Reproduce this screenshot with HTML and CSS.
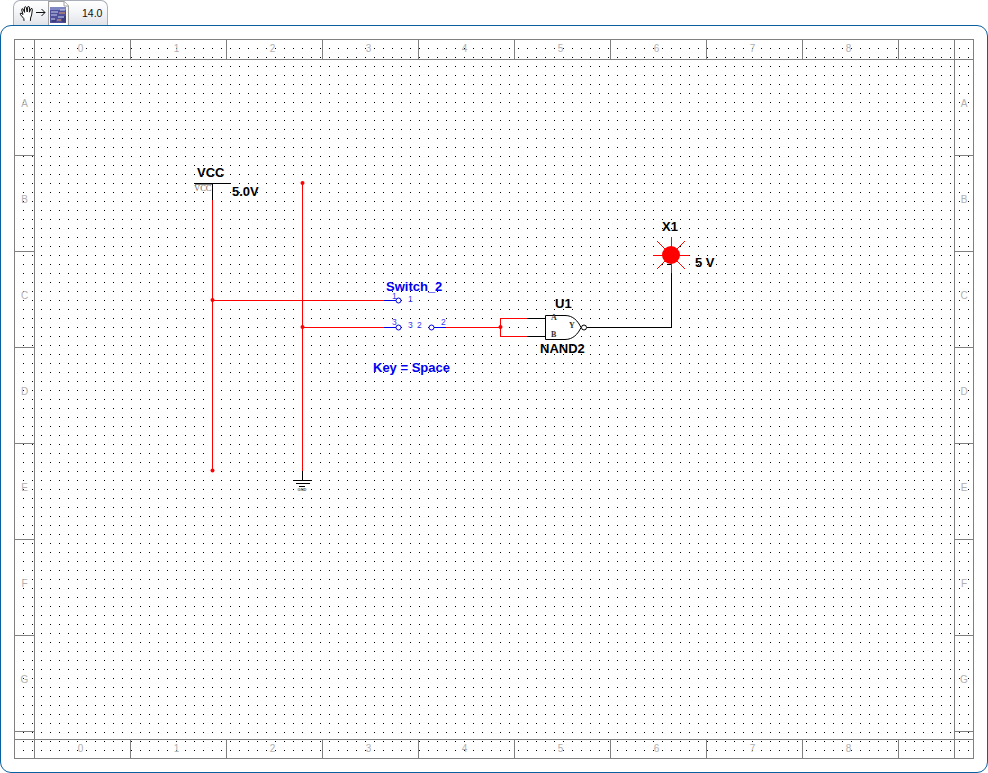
FILE: index.html
```html
<!DOCTYPE html>
<html lang="en">
<head>
<meta charset="utf-8">
<title>Schematic</title>
<link rel="stylesheet" href="styles.css">
</head>
<body>
<div class="tabbar">
  <div class="tab">
    <svg class="hand" viewBox="0 0 16 16" width="16" height="16">
      <path d="M5 15.5 L4.8 13.5 L1.6 9.8 Q0.6 8.2 2 8 L4 9.5 L2.6 4.6 Q2.8 3.2 4 4 L5.6 7.4 L5.4 2.4 Q6.2 1 7.2 2.2 L8.2 7 L8.8 1.8 Q10 0.9 10.5 2.2 L10.4 7.2 L12 3.6 Q13.4 3 13.4 4.6 L12.6 10 L11.6 13 L11.4 15.5" fill="#fff" stroke="#111" stroke-width="1" stroke-linejoin="round" stroke-linecap="round"/>
    </svg>
    <svg class="arrow" viewBox="0 0 10 9" width="10" height="9">
      <path d="M0 4.5 H9 M5.5 1 L9 4.5 L5.5 8" fill="none" stroke="#111" stroke-width="1"/>
    </svg>
    <svg class="doc" viewBox="0 0 21 25" width="21" height="25">
      <path d="M0.5 0.5 H16 L20.5 5 V24.5 H0.5 Z" fill="#fff" stroke="#a0a0a0" stroke-width="1.2"/>
      <path d="M16 0.5 V5 H20.5" fill="#fff" stroke="#a0a0a0"/>
      <rect x="2" y="6" width="16" height="16" fill="#50509a"/>
      <rect x="2" y="6" width="16" height="3" fill="#7f86c4"/>
      <path d="M3 11 H10 M3 14 H9 M10 16 H16 M3 18 H7 M12 9 H17" stroke="#c8d2f0" stroke-width="1"/>
      <path d="M11 12 H17 M9 19 H13" stroke="#e8a060" stroke-width="1"/>
      <path d="M15 17 V21 M17 15 V21 M4 20 H8" stroke="#2a2a60" stroke-width="1"/>
    </svg>
    <span class="version">14.0</span>
  </div>
</div>
<main class="panel">
  <div class="sheet">
    <svg class="schematic" width="958" height="718" viewBox="15 40 958 718" shape-rendering="crispEdges">
      <defs>
        <pattern id="dots" x="23" y="39" width="9" height="9" patternUnits="userSpaceOnUse">
          <rect x="0" y="0" width="1" height="1" fill="#000"/>
        </pattern>
      </defs>
      <rect x="23" y="48" width="946" height="703" fill="url(#dots)"/>

      <!-- wires -->
      <g class="wire-red">
        <path d="M212.5 200 V470.5"/>
        <path d="M302.5 183 V471"/>
        <path d="M212 300.5 H384"/>
        <path d="M302 327.5 H384"/>
        <path d="M446 327.5 H500"/>
        <path d="M500.5 327 V318.5 H527 M500.5 327 V336.5 H527"/>
      </g>
      <g class="wire-black">
        <path d="M194 183.5 H231"/>
        <path d="M212.5 183 V200"/>
        <path d="M302.5 471 V480"/>
        <path d="M293 480.5 H312 M296 483.5 H310 M299 486.5 H305"/>
        <path d="M527 318.5 H545 M527 336.5 H545"/>
        <path d="M587 327.5 H671.5 V264"/>
        <path d="M667 264.5 H671"/>
        <path class="overbar" d="M195 184.5 H212"/>
      </g>
      <g class="wire-blue">
        <path d="M384 300.5 H396"/>
        <path d="M384 327.5 H396 M433 327.5 H446"/>
      </g>
      <g class="round">
        <circle cx="398.5" cy="300.5" r="2.5" class="pin-blue"/>
        <circle cx="398.5" cy="327.5" r="2.5" class="pin-blue"/>
        <circle cx="431.5" cy="327.5" r="2.5" class="pin-blue"/>
        <circle cx="212.5" cy="300" r="2" class="node"/>
        <circle cx="302.5" cy="327" r="2" class="node"/>
        <circle cx="212.5" cy="470.5" r="2" class="node"/>
        <circle cx="302.5" cy="183" r="2" class="node"/>
        <circle cx="500.5" cy="327" r="2" class="node"/>

        <!-- gate -->
        <path d="M545.5 315.5 H565 C573 315.5 578 321 581 327.5 C578 334 573 339.5 565 339.5 H545.5 Z" class="gate"/>
        <circle cx="584" cy="327.5" r="2.5" class="gate"/>

        <!-- LED -->
        <path d="M653 255.5 H689 M671.5 237 V273 M657 241 L685 269 M685 241 L657 269" class="rays"/>
        <circle cx="671" cy="255" r="9" fill="#f00"/>
      </g>

      <text x="197" y="177" class="label">VCC</text>
      <text x="194" y="191" class="tiny">VCC</text>
      <text x="232" y="196" class="label">5.0V</text>
      <text x="386" y="291" class="label blue">Switch_2</text>
      <text x="373" y="372" class="label blue">Key = Space</text>
      <text x="555" y="308" class="label">U1</text>
      <text x="540" y="353" class="label">NAND2</text>
      <text x="662" y="231" class="label">X1</text>
      <text x="695" y="267" class="label">5 V</text>
      <text x="392" y="299" class="pin">1</text>
      <text x="408" y="302" class="pin">1</text>
      <text x="392" y="325" class="pin">3</text>
      <text x="408" y="328" class="pin">3</text>
      <text x="417" y="328" class="pin">2</text>
      <text x="441" y="325" class="pin">2</text>
      <text x="551" y="320" class="gate-pin">A</text>
      <text x="551" y="337" class="gate-pin">B</text>
      <text x="569" y="328" class="gate-pin">Y</text>
      <text x="302" y="491" class="gnd">GND</text>
    </svg>

    <div class="corner tl"></div>
    <div class="ruler h top">
      <span>0</span><span>1</span><span>2</span><span>3</span><span>4</span><span>5</span><span>6</span><span>7</span><span>8</span><span></span>
    </div>
    <div class="corner tr"></div>
    <div class="ruler v left">
      <span>A</span><span>B</span><span>C</span><span>D</span><span>E</span><span>F</span><span>G</span><span></span>
    </div>
    <div class="area"></div>
    <div class="ruler v right">
      <span>A</span><span>B</span><span>C</span><span>D</span><span>E</span><span>F</span><span>G</span><span></span>
    </div>
    <div class="corner bl"></div>
    <div class="ruler h bottom">
      <span>0</span><span>1</span><span>2</span><span>3</span><span>4</span><span>5</span><span>6</span><span>7</span><span>8</span><span></span>
    </div>
    <div class="corner br"></div>
  </div>
</main>
</body>
</html>
```
FILE: styles.css
```css
* { box-sizing: border-box; }
html, body { margin: 0; padding: 0; height: 773px; overflow: hidden; background: #fff; }
body { font-family: "Liberation Sans", Arial, sans-serif; }

.tabbar { height: 25px; padding-left: 13px; }
.tab {
  width: 95px; height: 26px;
  display: flex; align-items: flex-start;
  border: 1px solid #a9aeb8; border-bottom: 0;
  border-radius: 7px 7px 0 0;
  background: linear-gradient(#ffffff, #f4f5f7 45%, #dfe2e8);
  position: relative;
}
.hand { margin: 4px 0 0 5px; flex: none; }
.arrow { flex: none; margin: 7px 2px 0 1px; }
.doc { flex: none; margin: 0; }
.version { font-size: 10.5px; line-height: 12px; margin: 6px 0 0 13px; color: #111; }

.panel {
  position: relative;
  width: 988px; height: 748px;
  border: 1px solid #0a5f9e;
  border-radius: 11px;
  padding: 13px 0 0 13px;
  background: #fff;
}

.sheet {
  position: relative;
  width: 960px; height: 720px;
  border: 1px solid #808080;
  display: grid;
  grid-template-columns: 20px 919px 19px;
  grid-template-rows: 20px 679px 19px;
}
.schematic { position: absolute; left: 0; top: 0; display: block; }

.corner.tl { border-right: 1px solid #808080; border-bottom: 1px solid #808080; }
.corner.tr { border-left: 1px solid #808080; border-bottom: 1px solid #808080; }
.corner.bl { border-right: 1px solid #808080; border-top: 1px solid #808080; }
.corner.br { border-left: 1px solid #808080; border-top: 1px solid #808080; }

.ruler { display: flex; font-size: 10px; color: #b0b0b0; position: relative; }
.ruler.top { border-bottom: 1px solid #808080; }
.ruler.bottom { border-top: 1px solid #808080; }
.ruler.left { border-right: 1px solid #808080; }
.ruler.right { border-left: 1px solid #808080; }

.ruler.h span {
  width: 96px; flex: none;
  border-right: 1px solid #808080;
  display: flex; align-items: center; justify-content: center;
  padding-right: 4px; padding-bottom: 2px;
}
.ruler.h span:last-child { width: 55px; border-right: 0; }

.ruler.v { flex-direction: column; }
.ruler.v span {
  height: 96px; flex: none;
  border-bottom: 1px solid #808080;
  display: flex; align-items: center; justify-content: center;
  padding-bottom: 8px;
}
.ruler.v span:last-child { height: 7px; padding: 0; border-bottom: 0; }

.wire-red path, .wire-black path, .wire-blue path { fill: none; stroke-width: 1; }
.wire-red path { stroke: #f00; }
.wire-black path { stroke: #000; }
.wire-black path.overbar { stroke: #888; }
.wire-blue path { stroke: #0000e6; }

.round { shape-rendering: geometricPrecision; }
.pin-blue { fill: #fff; stroke: #0000e6; stroke-width: 1; }
.node { fill: #f00; }
.gate { fill: #fff; stroke: #000; stroke-width: 1; }
.rays { fill: none; stroke: #f00; stroke-width: 1; }

.label { font-size: 13px; font-weight: 700; fill: #000; }
.label.blue { fill: #0000f0; }
.tiny { font-size: 8.5px; fill: #666; font-family: "Liberation Serif", serif; }
.pin { font-size: 8.5px; fill: #3a3af0; }
.gate-pin { font-size: 8px; fill: #333; font-family: "Liberation Serif", serif; font-weight: 700; }
.gnd { font-size: 4px; fill: #555; font-weight: 700; text-anchor: middle; }
```
